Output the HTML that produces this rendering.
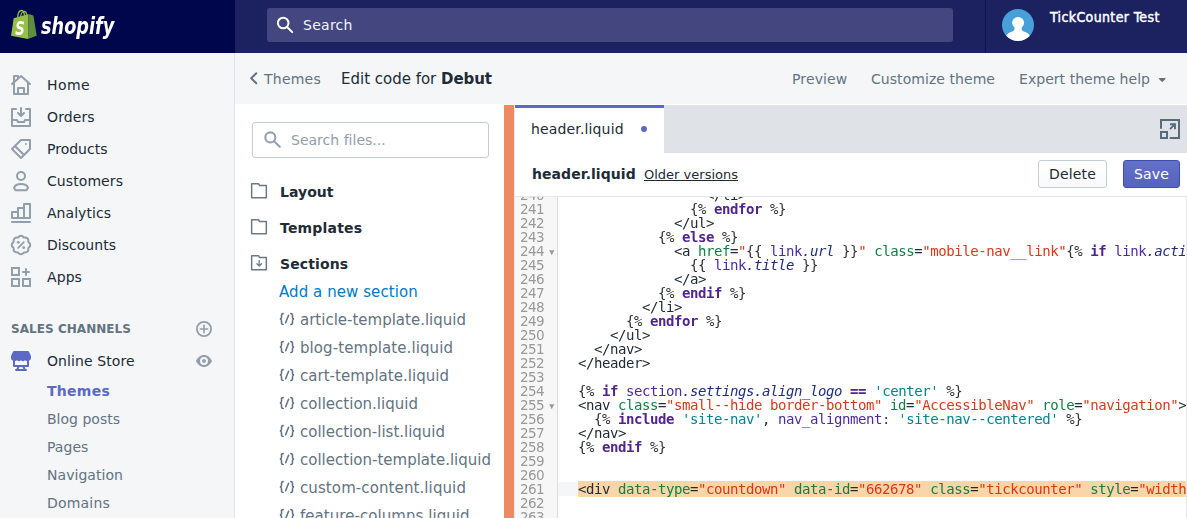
<!DOCTYPE html>
<html lang="en">
<head>
<meta charset="utf-8">
<title>Edit code for Debut</title>
<style>
*{box-sizing:border-box;margin:0;padding:0}
html,body{width:1187px;height:518px;overflow:hidden;background:#fff}
body{font-family:"DejaVu Sans","Liberation Sans",sans-serif;font-size:14px;color:#212b36;position:relative}
.abs,.t{position:absolute}
.t{white-space:nowrap}
svg{display:block;position:absolute;overflow:visible}
.gl{will-change:transform}
#topbar{left:0;top:0;width:1187px;height:53px;background:#1c2260}
#brand{left:0;top:0;width:235px;height:53px;background:#00064c}
#search{left:267px;top:8px;width:686px;height:34px;background:#43467f;border-radius:3px}
#userdiv{left:985px;top:0;width:1px;height:53px;background:#0f1547}
#sidebar{left:0;top:53px;width:235px;height:465px;background:#f4f6f8;border-right:1px solid #dfe3e8}
#subhead{left:235px;top:53px;width:952px;height:51px;background:#f4f6f8}
#files{left:235px;top:104px;width:952px;height:414px;background:#fff}
#orange{left:504px;top:105px;width:10px;height:413px;background:#ee8a62}
#tabbar{left:514px;top:105px;width:673px;height:48px;background:#dfe3e8;border-left:1px solid #eef1f8}
#tab{left:515px;top:105px;width:149px;height:48px;background:#fff;border-top:3px solid #5c6ac4}
#fhead{left:514px;top:153px;width:673px;height:44px;background:#fff;border-bottom:1px solid #e4e6e8}
.btn{position:absolute;top:160px;height:28px;border-radius:3px}
#code{left:514px;top:197px;width:673px;height:321px;overflow:hidden;border-right:1px solid #e4e6e8;will-change:transform}
#gutter{left:0;top:0;width:44px;height:322px;background:#f7f7f7;border-right:1px solid #ddd;border-left:1px solid #e4e8f2}
.ln{position:absolute;left:0;width:30px;text-align:right;height:14px;line-height:14px;color:#999;font-size:13.5px;letter-spacing:-0.59px}
.cl{position:absolute;left:64px;height:14px;line-height:14px;white-space:pre;color:#212b36;font-family:"DejaVu Sans Mono","Liberation Mono",monospace;font-size:14px;letter-spacing:-0.428px}
.k{color:#50248f;font-weight:bold}
.a{color:#108043}
.s{color:#de3618}
.v{color:#4b2ca0}
.p{color:#202e78;font-style:italic}
.q{color:#00848e}
.b{color:#333}
</style>
</head>
<body>
<div id="topbar" class="abs"></div><div id="brand" class="abs"></div>
<div id="search" class="abs"></div>
<div class="t" style="left:303px;top:15px;font-size:14px;line-height:20px;color:#f2f3f8;letter-spacing:0.266px;">Search</div>
<div id="userdiv" class="abs"></div>
<div class="t" style="left:1050px;top:8px;font-size:14px;line-height:18px;color:#fff;letter-spacing:0.364px;font-family:'DejaVu Sans Condensed','DejaVu Sans','Liberation Sans',sans-serif;-webkit-text-stroke:0.45px currentColor;">TickCounter Test</div>
<div id="sidebar" class="abs"></div>
<div class="t" style="left:47px;top:75px;font-size:14px;line-height:20px;color:#212b36;letter-spacing:0.414px;">Home</div>
<div class="t" style="left:47px;top:107px;font-size:14px;line-height:20px;color:#212b36;letter-spacing:0.112px;">Orders</div>
<div class="t" style="left:47px;top:139px;font-size:14px;line-height:20px;color:#212b36;letter-spacing:-0.000px;">Products</div>
<div class="t" style="left:47px;top:171px;font-size:14px;line-height:20px;color:#212b36;letter-spacing:0.078px;">Customers</div>
<div class="t" style="left:47px;top:203px;font-size:14px;line-height:20px;color:#212b36;letter-spacing:0.047px;">Analytics</div>
<div class="t" style="left:47px;top:235px;font-size:14px;line-height:20px;color:#212b36;letter-spacing:0.027px;">Discounts</div>
<div class="t" style="left:47px;top:267px;font-size:14px;line-height:20px;color:#212b36;letter-spacing:0.089px;">Apps</div>
<div class="t" style="left:11px;top:319px;font-size:12px;line-height:20px;color:#637381;letter-spacing:0.050px;font-weight:bold;">SALES CHANNELS</div>
<div class="t" style="left:47px;top:351px;font-size:14px;line-height:20px;color:#212b36;letter-spacing:0.090px;">Online Store</div>
<div class="t" style="left:47px;top:381px;font-size:14px;line-height:20px;color:#5c6ac4;letter-spacing:0.262px;font-weight:bold;">Themes</div>
<div class="t" style="left:47px;top:409px;font-size:14px;line-height:20px;color:#637381;letter-spacing:0.007px;">Blog posts</div>
<div class="t" style="left:47px;top:437px;font-size:14px;line-height:20px;color:#637381;letter-spacing:0.037px;">Pages</div>
<div class="t" style="left:47px;top:465px;font-size:14px;line-height:20px;color:#637381;letter-spacing:0.049px;">Navigation</div>
<div class="t" style="left:47px;top:493px;font-size:14px;line-height:20px;color:#637381;letter-spacing:0.197px;">Domains</div>
<div id="subhead" class="abs"></div>
<div class="t" style="left:264px;top:69px;font-size:14px;line-height:20px;color:#637381;letter-spacing:0.236px;">Themes</div>
<div class="t" style="left:341px;top:69px;font-size:15px;line-height:20px;color:#212b36;letter-spacing:-0.011px;">Edit code for </div>
<div class="t" style="left:441px;top:69px;font-size:15px;line-height:20px;color:#212b36;letter-spacing:-0.042px;font-weight:bold;">Debut</div>
<div class="t" style="left:792px;top:69px;font-size:14px;line-height:20px;color:#637381;letter-spacing:0.136px;">Preview</div>
<div class="t" style="left:871px;top:69px;font-size:14px;line-height:20px;color:#637381;letter-spacing:0.056px;">Customize theme</div>
<div class="t" style="left:1019px;top:69px;font-size:14px;line-height:20px;color:#637381;letter-spacing:0.043px;">Expert theme help</div>
<div id="files" class="abs"></div>
<div class="abs" style="left:252px;top:122px;width:237px;height:36px;border:1px solid #c4cdd5;border-radius:3px;background:#fff"></div>
<div class="t" style="left:291px;top:130px;font-size:14px;line-height:20px;color:#919eab;letter-spacing:0.012px;">Search files...</div>
<div class="t" style="left:280px;top:182px;font-size:14px;line-height:20px;color:#212b36;letter-spacing:0.038px;font-weight:bold;">Layout</div>
<div class="t" style="left:280px;top:218px;font-size:14px;line-height:20px;color:#212b36;letter-spacing:0.198px;font-weight:bold;">Templates</div>
<div class="t" style="left:280px;top:254px;font-size:14px;line-height:20px;color:#212b36;letter-spacing:0.127px;font-weight:bold;">Sections</div>
<div class="t" style="left:279px;top:282px;font-size:15px;line-height:20px;color:#007ace;letter-spacing:0.069px;">Add a new section</div>
<div class="t" style="left:300px;top:310px;font-size:15px;line-height:20px;color:#637381;letter-spacing:0.000px;">article-template.liquid</div>
<div class="t" style="left:300px;top:338px;font-size:15px;line-height:20px;color:#637381;letter-spacing:0.083px;">blog-template.liquid</div>
<div class="t" style="left:300px;top:366px;font-size:15px;line-height:20px;color:#637381;letter-spacing:0.028px;">cart-template.liquid</div>
<div class="t" style="left:300px;top:394px;font-size:15px;line-height:20px;color:#637381;letter-spacing:0.012px;">collection.liquid</div>
<div class="t" style="left:300px;top:422px;font-size:15px;line-height:20px;color:#637381;letter-spacing:-0.011px;">collection-list.liquid</div>
<div class="t" style="left:300px;top:450px;font-size:15px;line-height:20px;color:#637381;letter-spacing:0.003px;">collection-template.liquid</div>
<div class="t" style="left:300px;top:478px;font-size:15px;line-height:20px;color:#637381;letter-spacing:0.100px;">custom-content.liquid</div>
<div class="t" style="left:300px;top:506px;font-size:15px;line-height:20px;color:#637381;letter-spacing:0.057px;">feature-columns.liquid</div>
<div id="orange" class="abs"></div><div id="tabbar" class="abs"></div><div id="tab" class="abs"></div>
<div class="t" style="left:531px;top:119px;font-size:14px;line-height:20px;color:#212b36;letter-spacing:0.147px;">header.liquid</div>
<div class="abs" style="left:641px;top:126px;width:6.400px;height:6.400px;border-radius:50%;background:#5c6ac4"></div>
<div id="fhead" class="abs"></div>
<div class="t" style="left:532px;top:164px;font-size:14px;line-height:20px;color:#212b36;letter-spacing:0.050px;font-weight:bold;">header.liquid</div>
<div class="t" style="left:644px;top:165px;font-size:13px;line-height:20px;color:#212b36;letter-spacing:0.003px;text-decoration:underline;">Older versions</div>
<div class="btn" style="left:1038px;width:69px;border:1px solid #c4cdd5;background:linear-gradient(#fff,#f9fafb)"></div>
<div class="t" style="left:1049px;top:164px;font-size:14px;line-height:20px;color:#212b36;letter-spacing:0.167px;">Delete</div>
<div class="btn" style="left:1123px;width:57px;border:1px solid #3f4eae;background:linear-gradient(#6371c7,#5563c1)"></div>
<div class="t" style="left:1134px;top:164px;font-size:14px;line-height:20px;color:#fff;letter-spacing:0.159px;">Save</div>
<div class="abs" style="left:514px;top:105px;width:1px;height:413px;background:#e6ebf5"></div>
<div id="code" class="abs"><div id="gutter" class="abs"></div><div class="abs" style="left:44px;top:285px;width:629px;height:14px;background:#f4f6f8"></div>
<div class="ln" style="top:-9px">240</div>
<div class="cl" style="top:-9px">                &lt;/li&gt;</div>
<div class="ln" style="top:5px">241</div>
<div class="cl" style="top:5px">              <span class="b">{% </span><span class="k">endfor</span><span class="b"> %}</span></div>
<div class="ln" style="top:19px">242</div>
<div class="cl" style="top:19px">            &lt;/ul&gt;</div>
<div class="ln" style="top:33px">243</div>
<div class="cl" style="top:33px">          <span class="b">{% </span><span class="k">else</span><span class="b"> %}</span></div>
<div class="ln" style="top:47px">244</div>
<svg style="left:35px;top:53px" width="6" height="6" viewBox="0 0 6 6"><path d="M.2 .2 H5.300 L2.750 5.200 Z" fill="#999"/></svg>
<div class="cl" style="top:47px">            &lt;a <span class="a">href</span>=<span class="s">&quot;</span><span class="b">{{ </span><span class="v">link</span><span class="p">.url</span><span class="b"> }}</span><span class="s">&quot;</span> <span class="a">class</span>=<span class="s">&quot;mobile-nav__link&quot;</span><span class="b">{% </span><span class="k">if</span> <span class="v">link</span><span class="p">.active</span><span class="b"> %}</span> <span class="a">aria-current</span>=<span class="s">&quot;page&quot;</span><span class="b">{% </span><span class="k">endif</span><span class="b"> %}</span>&gt;</div>
<div class="ln" style="top:61px">245</div>
<div class="cl" style="top:61px">              <span class="b">{{ </span><span class="v">link</span><span class="p">.title</span><span class="b"> }}</span></div>
<div class="ln" style="top:75px">246</div>
<div class="cl" style="top:75px">            &lt;/a&gt;</div>
<div class="ln" style="top:89px">247</div>
<div class="cl" style="top:89px">          <span class="b">{% </span><span class="k">endif</span><span class="b"> %}</span></div>
<div class="ln" style="top:103px">248</div>
<div class="cl" style="top:103px">        &lt;/li&gt;</div>
<div class="ln" style="top:117px">249</div>
<div class="cl" style="top:117px">      <span class="b">{% </span><span class="k">endfor</span><span class="b"> %}</span></div>
<div class="ln" style="top:131px">250</div>
<div class="cl" style="top:131px">    &lt;/ul&gt;</div>
<div class="ln" style="top:145px">251</div>
<div class="cl" style="top:145px">  &lt;/nav&gt;</div>
<div class="ln" style="top:159px">252</div>
<div class="cl" style="top:159px">&lt;/header&gt;</div>
<div class="ln" style="top:173px">253</div>
<div class="ln" style="top:187px">254</div>
<div class="cl" style="top:187px"><span class="b">{% </span><span class="k">if</span> <span class="v">section</span><span class="p">.settings.align_logo</span> <span class="k">==</span> <span class="q">&#x27;center&#x27;</span><span class="b"> %}</span></div>
<div class="ln" style="top:201px">255</div>
<svg style="left:35px;top:207px" width="6" height="6" viewBox="0 0 6 6"><path d="M.2 .2 H5.300 L2.750 5.200 Z" fill="#999"/></svg>
<div class="cl" style="top:201px">&lt;nav <span class="a">class</span>=<span class="s">&quot;small--hide border-bottom&quot;</span> <span class="a">id</span>=<span class="s">&quot;AccessibleNav&quot;</span> <span class="a">role</span>=<span class="s">&quot;navigation&quot;</span>&gt;</div>
<div class="ln" style="top:215px">256</div>
<div class="cl" style="top:215px">  <span class="b">{% </span><span class="k">include</span> <span class="q">&#x27;site-nav&#x27;</span>, <span class="v">nav_alignment:</span> <span class="q">&#x27;site-nav--centered&#x27;</span><span class="b"> %}</span></div>
<div class="ln" style="top:229px">257</div>
<div class="cl" style="top:229px">&lt;/nav&gt;</div>
<div class="ln" style="top:243px">258</div>
<div class="cl" style="top:243px"><span class="b">{% </span><span class="k">endif</span><span class="b"> %}</span></div>
<div class="ln" style="top:257px">259</div>
<div class="ln" style="top:271px">260</div>
<div class="ln" style="top:285px">261</div>
<div class="cl" style="top:285px"><span style="background:#f9d5a7">&lt;div <span class="a">data-type</span>=<span class="s">&quot;countdown&quot;</span> <span class="a">data-id</span>=<span class="s">&quot;662678&quot;</span> <span class="a">class</span>=<span class="s">&quot;tickcounter&quot;</span> <span class="a">style</span>=<span class="s">&quot;width: 100%; position: relative; padding-bottom: 25%&quot;</span></span></div>
<div class="ln" style="top:299px">262</div>
<div class="ln" style="top:313px">263</div>
<div class="ln" style="top:327px">264</div>
</div>
<svg style="left:0px;top:0px" width="130" height="53" viewBox="0 0 130 53" class="gl"><path d="M17.6 17.6 C17.9 13.6 19.6 10.6 21.3 10.5 C23 10.4 24.2 12.6 24.5 15.6 M20.6 16.9 C21 13.4 22.8 11.2 24.3 11.3 C25.6 11.4 26.4 12.8 26.7 14.7" fill="none" stroke="#95bf47" stroke-width="1.3"/><path d="M13.7 18.3 L28.4 14 L28 39.1 L11 35.7 Z" fill="#95bf47"/><path d="M28.4 14 L33.4 15.6 L36.7 35.7 L28 39.1 Z" fill="#5e8e3e"/><text x="0" y="0" transform="translate(15.2 34.6) scale(.76 1)" font-family="'DejaVu Sans Condensed','DejaVu Sans','Liberation Sans',sans-serif" font-weight="bold" font-style="italic" font-size="19.3" fill="#fff">S</text><text x="41.1" y="34.1" font-family="'DejaVu Sans Condensed','DejaVu Sans','Liberation Sans',sans-serif" font-weight="bold" font-style="italic" font-size="23.5" fill="#fff" textLength="73.2" lengthAdjust="spacingAndGlyphs">shopify</text></svg>
<svg style="left:274px;top:14px" width="22" height="22" viewBox="0 0 22 22" ><circle cx="9.2" cy="9" r="5.3" fill="none" stroke="#fff" stroke-width="2"/><path d="M13.1 13 L18.2 18.1" stroke="#fff" stroke-width="2" stroke-linecap="round"/></svg>
<svg style="left:1002px;top:9px" width="32" height="32" viewBox="0 0 32 32" ><defs><clipPath id="av"><circle cx="16" cy="16" r="16"/></clipPath></defs><circle cx="16" cy="16" r="16" fill="#47a1d8"/><g clip-path="url(#av)" fill="#fff"><ellipse cx="16.100" cy="13.700" rx="6" ry="5.700"/><path d="M12.500 17 h7.200 v3.200 c0 1.300 1.200 2 3.400 2.800 c2.600 1 4.500 2.300 5 4.500 V33 H4 v-5.500 c.500-2.200 2.400-3.500 5-4.500 c2.200-.800 3.500-1.500 3.500-2.800z"/></g></svg>
<svg style="left:11px;top:75px" width="20" height="20" viewBox="0 0 20 20" ><path d="M19.664 8.252l-9-8a1 1 0 0 0-1.328 0L8 1.44V1a1 1 0 0 0-1-1H3a1 1 0 0 0-1 1v5.773L.336 8.252a1.001 1.001 0 0 0 1.328 1.496L2 9.449V19a1 1 0 0 0 1 1h14a1 1 0 0 0 1-1V9.449l.336.299a.997.997 0 0 0 1.411-.083 1.001 1.001 0 0 0-.083-1.413zM16 18h-2v-5a1 1 0 0 0-1-1H7a1 1 0 0 0-1 1v5H4V7.671l6-5.333 6 5.333V18zm-8 0v-4h4v4H8zM4 2h2v1.218L4 4.996V2z" fill="#919eab" fill-rule="evenodd"/></svg>
<svg style="left:11px;top:107px" width="20" height="20" viewBox="0 0 20 20" ><path d="M2 18v-4h3.382l.723 1.447c.17.339.516.553.895.553h6c.379 0 .725-.214.895-.553L14.618 14H18v4H2zM19 1a1 1 0 0 1 1 1v17a1 1 0 0 1-1 1H1a1 1 0 0 1-1-1V2a1 1 0 0 1 1-1h4a1 1 0 0 1 0 2H2v9h4c.379 0 .725.214.895.553L7.618 14h4.764l.723-1.447c.17-.339.516-.553.895-.553h4V3h-3a1 1 0 0 1 0-2h4zM6.293 6.707a.999.999 0 1 1 1.414-1.414L9 6.586V1a1 1 0 0 1 2 0v5.586l1.293-1.293a.999.999 0 1 1 1.414 1.414l-3 3a.997.997 0 0 1-1.414 0l-3-3z" fill="#919eab" fill-rule="evenodd"/></svg>
<svg style="left:11px;top:139px" width="20" height="20" viewBox="0 0 20 20" ><path d="M19 0h-9c-.265 0-.52.106-.707.293l-9 9a.999.999 0 0 0 0 1.414l9 9a.997.997 0 0 0 1.414 0l9-9A.997.997 0 0 0 20 10V1a1 1 0 0 0-1-1zm-9 17.586L2.414 10 4 8.414 11.586 16 10 17.586zm8-8l-5 5L5.414 7l5-5H18v7.586zM15 6a1 1 0 1 0 0-2 1 1 0 0 0 0 2" fill="#919eab" fill-rule="evenodd"/></svg>
<svg style="left:11px;top:171px" width="20" height="20" viewBox="0 0 20 20" ><circle cx="10" cy="5" r="4" fill="none" stroke="#919eab" stroke-width="2"/><path d="M4.500 19.200 L3 16.700 C4 14.400 7 13.100 10 13.100 C13 13.100 16 14.400 17 16.700 L15.500 19.200 Z" fill="none" stroke="#919eab" stroke-width="2" stroke-linejoin="round"/></svg>
<svg style="left:11px;top:203px" width="20" height="20" viewBox="0 0 20 20" ><path d="M19 18a1 1 0 0 1 0 2H1a1 1 0 0 1 0-2h18zm0-18a1 1 0 0 1 1 1v14a1 1 0 0 1-1 1H1a1 1 0 0 1-1-1V9a1 1 0 0 1 1-1h5V5a1 1 0 0 1 1-1h5V1a1 1 0 0 1 1-1h6zM2 14h4v-4H2v4zm6 0h4V6H8v8zm6 0h4V2h-4v12z" fill="#919eab" fill-rule="evenodd"/></svg>
<svg style="left:11px;top:235px" width="20" height="20" viewBox="0 0 20 20" ><path d="M13.06 2.61 Q17.92 2.08 17.39 6.94 Q21.20 10.00 17.39 13.06 Q17.92 17.92 13.06 17.39 Q10.00 21.20 6.94 17.39 Q2.08 17.92 2.61 13.06 Q-1.20 10.00 2.61 6.94 Q2.08 2.08 6.94 2.61 Q10.00 -1.20 13.06 2.61Z" fill="none" stroke="#919eab" stroke-width="2" stroke-linejoin="round"/><path d="M7.2 12.800 L12.800 7.200" stroke="#919eab" stroke-width="1.8" stroke-linecap="round"/><circle cx="7.300" cy="7.300" r="1.400" fill="#919eab"/><circle cx="12.700" cy="12.700" r="1.400" fill="#919eab"/></svg>
<svg style="left:11px;top:267px" width="20" height="20" viewBox="0 0 20 20" ><g fill="none" stroke="#919eab" stroke-width="2"><rect x="1" y="1" width="7" height="7"/><rect x="1" y="12" width="7" height="7"/><rect x="12" y="12" width="7" height="7"/><path d="M15 2 V8 M12 5 H18" stroke-linecap="round"/></g></svg>
<svg style="left:11px;top:351px" width="20" height="20" viewBox="0 0 20 20" ><path fill="#5c6ac4" fill-rule="evenodd" d="M3 0H17a1 1 0 0 1 .870.500L19.870 4.800c.090.150.130.320.130.500V7a3 3 0 0 1-2 2.830V15a1 1 0 0 1-1 1h-3.400l1 2H15a1 1 0 0 1 0 2H5a1 1 0 0 1 0-2h.400l1-2H3a1 1 0 0 1-1-1V9.830A3 3 0 0 1 0 7V5.300c0-.180.040-.350.130-.500L2.130.500A1 1 0 0 1 3 0z M4 10v4h12v-4a3 3 0 0 1-2-.760a3 3 0 0 1-4 0a3 3 0 0 1-4 0A3 3 0 0 1 4 10z M8.620 16l-1 2h4.760l-1-2z"/></svg>
<svg style="left:196px;top:320.7px" width="16" height="16" viewBox="0 0 16 16" ><circle cx="8" cy="8" r="7.100" fill="none" stroke="#919eab" stroke-width="1.800"/><path d="M8 4.300 V11.700 M4.300 8 H11.700" stroke="#919eab" stroke-width="1.600" stroke-linecap="round"/></svg>
<svg style="left:196px;top:355px" width="16" height="12" viewBox="0 0 16 12" ><path fill="#919eab" fill-rule="evenodd" d="M8 0 C11.600 0 14.600 2.700 16 6 C14.600 9.300 11.600 12 8 12 C4.400 12 1.400 9.300 0 6 C1.400 2.700 4.400 0 8 0z M8 2 a4 4 0 1 0 0 8 a4 4 0 0 0 0-8z M8 4.100 a1.900 1.900 0 1 1 0 3.800 a1.900 1.900 0 0 1 0-3.800z"/></svg>
<svg style="left:248px;top:70px" width="12" height="16" viewBox="0 0 12 16" ><path d="M8.300 3.300 L3.200 8.300 L8.300 13.300" fill="none" stroke="#637381" stroke-width="2" stroke-linecap="round" stroke-linejoin="round"/></svg>
<svg style="left:1158px;top:76px" width="9" height="8" viewBox="0 0 9 8" ><path d="M1.400 2.600 H7 L4.200 5.400 Z" fill="#637381" stroke="#637381" stroke-width="1.200" stroke-linejoin="round"/></svg>
<svg style="left:262px;top:129px" width="22" height="22" viewBox="0 0 22 22" ><circle cx="8.300" cy="8.400" r="5" fill="none" stroke="#95a2af" stroke-width="2.100"/><path d="M12 12.200 L17.800 17.800" stroke="#95a2af" stroke-width="2.100" stroke-linecap="round"/></svg>
<svg style="left:251px;top:183px" width="16" height="15.5" viewBox="0 0 16 15.5" ><path d="M.65 .65 H7.500 L8.600 2.600 H15.350 V14.850 H.65 Z" fill="none" stroke="#6b7a88" stroke-width="1.500" stroke-linejoin="round"/></svg>
<svg style="left:251px;top:219px" width="16" height="15.5" viewBox="0 0 16 15.5" ><path d="M.65 .65 H7.500 L8.600 2.600 H15.350 V14.850 H.65 Z" fill="none" stroke="#6b7a88" stroke-width="1.500" stroke-linejoin="round"/></svg>
<svg style="left:251px;top:255px" width="16" height="15.5" viewBox="0 0 16 15.5" ><path d="M.65 .65 H7.500 L8.600 2.600 H15.350 V14.850 H.65 Z" fill="none" stroke="#6b7a88" stroke-width="1.500" stroke-linejoin="round"/><path d="M8.200 5.600 V10.800 M5.900 8.700 L8.200 11 L10.500 8.700" fill="none" stroke="#6b7a88" stroke-width="1.300" stroke-linecap="round" stroke-linejoin="round"/></svg>
<svg style="left:278.7px;top:312.5px" width="16" height="12" viewBox="0 0 16 12" ><path d="M4.200 .600 C2.600 .600 2.500 1.500 2.500 2.600 V4.200 C2.500 5.300 2 5.900 .900 6 C2 6.100 2.500 6.700 2.500 7.800 V9.400 C2.500 10.500 2.600 11.400 4.200 11.400 M6.600 9.800 L9.600 2.200 M11.800 .600 C13.400 .600 13.500 1.500 13.500 2.600 V4.200 C13.500 5.300 14 5.900 15.100 6 C14 6.100 13.500 6.700 13.500 7.800 V9.400 C13.500 10.500 13.400 11.400 11.800 11.400" fill="none" stroke="#637381" stroke-width="1.550" stroke-linecap="round"/></svg>
<svg style="left:278.7px;top:340.5px" width="16" height="12" viewBox="0 0 16 12" ><path d="M4.200 .600 C2.600 .600 2.500 1.500 2.500 2.600 V4.200 C2.500 5.300 2 5.900 .900 6 C2 6.100 2.500 6.700 2.500 7.800 V9.400 C2.500 10.500 2.600 11.400 4.200 11.400 M6.600 9.800 L9.600 2.200 M11.800 .600 C13.400 .600 13.500 1.500 13.500 2.600 V4.200 C13.500 5.300 14 5.900 15.100 6 C14 6.100 13.500 6.700 13.500 7.800 V9.400 C13.500 10.500 13.400 11.400 11.800 11.400" fill="none" stroke="#637381" stroke-width="1.550" stroke-linecap="round"/></svg>
<svg style="left:278.7px;top:368.5px" width="16" height="12" viewBox="0 0 16 12" ><path d="M4.200 .600 C2.600 .600 2.500 1.500 2.500 2.600 V4.200 C2.500 5.300 2 5.900 .900 6 C2 6.100 2.500 6.700 2.500 7.800 V9.400 C2.500 10.500 2.600 11.400 4.200 11.400 M6.600 9.800 L9.600 2.200 M11.800 .600 C13.400 .600 13.500 1.500 13.500 2.600 V4.200 C13.500 5.300 14 5.900 15.100 6 C14 6.100 13.500 6.700 13.500 7.800 V9.400 C13.500 10.500 13.400 11.400 11.800 11.400" fill="none" stroke="#637381" stroke-width="1.550" stroke-linecap="round"/></svg>
<svg style="left:278.7px;top:396.5px" width="16" height="12" viewBox="0 0 16 12" ><path d="M4.200 .600 C2.600 .600 2.500 1.500 2.500 2.600 V4.200 C2.500 5.300 2 5.900 .900 6 C2 6.100 2.500 6.700 2.500 7.800 V9.400 C2.500 10.500 2.600 11.400 4.200 11.400 M6.600 9.800 L9.600 2.200 M11.800 .600 C13.400 .600 13.500 1.500 13.500 2.600 V4.200 C13.500 5.300 14 5.900 15.100 6 C14 6.100 13.500 6.700 13.500 7.800 V9.400 C13.500 10.500 13.400 11.400 11.800 11.400" fill="none" stroke="#637381" stroke-width="1.550" stroke-linecap="round"/></svg>
<svg style="left:278.7px;top:424.5px" width="16" height="12" viewBox="0 0 16 12" ><path d="M4.200 .600 C2.600 .600 2.500 1.500 2.500 2.600 V4.200 C2.500 5.300 2 5.900 .900 6 C2 6.100 2.500 6.700 2.500 7.800 V9.400 C2.500 10.500 2.600 11.400 4.200 11.400 M6.600 9.800 L9.600 2.200 M11.800 .600 C13.400 .600 13.500 1.500 13.500 2.600 V4.200 C13.500 5.300 14 5.900 15.100 6 C14 6.100 13.500 6.700 13.500 7.800 V9.400 C13.500 10.500 13.400 11.400 11.800 11.400" fill="none" stroke="#637381" stroke-width="1.550" stroke-linecap="round"/></svg>
<svg style="left:278.7px;top:452.5px" width="16" height="12" viewBox="0 0 16 12" ><path d="M4.200 .600 C2.600 .600 2.500 1.500 2.500 2.600 V4.200 C2.500 5.300 2 5.900 .900 6 C2 6.100 2.500 6.700 2.500 7.800 V9.400 C2.500 10.500 2.600 11.400 4.200 11.400 M6.600 9.800 L9.600 2.200 M11.800 .600 C13.400 .600 13.500 1.500 13.500 2.600 V4.200 C13.500 5.300 14 5.900 15.100 6 C14 6.100 13.500 6.700 13.500 7.800 V9.400 C13.500 10.500 13.400 11.400 11.800 11.400" fill="none" stroke="#637381" stroke-width="1.550" stroke-linecap="round"/></svg>
<svg style="left:278.7px;top:480.5px" width="16" height="12" viewBox="0 0 16 12" ><path d="M4.200 .600 C2.600 .600 2.500 1.500 2.500 2.600 V4.200 C2.500 5.300 2 5.900 .900 6 C2 6.100 2.500 6.700 2.500 7.800 V9.400 C2.500 10.500 2.600 11.400 4.200 11.400 M6.600 9.800 L9.600 2.200 M11.800 .600 C13.400 .600 13.500 1.500 13.500 2.600 V4.200 C13.500 5.300 14 5.900 15.100 6 C14 6.100 13.500 6.700 13.500 7.800 V9.400 C13.500 10.500 13.400 11.400 11.800 11.400" fill="none" stroke="#637381" stroke-width="1.550" stroke-linecap="round"/></svg>
<svg style="left:278.7px;top:508.5px" width="16" height="12" viewBox="0 0 16 12" ><path d="M4.200 .600 C2.600 .600 2.500 1.500 2.500 2.600 V4.200 C2.500 5.300 2 5.900 .900 6 C2 6.100 2.500 6.700 2.500 7.800 V9.400 C2.500 10.500 2.600 11.400 4.200 11.400 M6.600 9.800 L9.600 2.200 M11.800 .600 C13.400 .600 13.500 1.500 13.500 2.600 V4.200 C13.500 5.300 14 5.900 15.100 6 C14 6.100 13.500 6.700 13.500 7.800 V9.400 C13.500 10.500 13.400 11.400 11.800 11.400" fill="none" stroke="#637381" stroke-width="1.550" stroke-linecap="round"/></svg>
<svg style="left:1160px;top:119px" width="20" height="20" viewBox="0 0 20 20" ><g fill="none" stroke="#596a7a" stroke-width="2"><path d="M1 9 V1 H19 V19 H10.500" stroke-linecap="round"/><rect x="1" y="13" width="6" height="6"/><path d="M10 5.200 H15 V10.200 M15 5.200 L10 10.200" stroke-width="1.900"/></g></svg>
</body>
</html>
